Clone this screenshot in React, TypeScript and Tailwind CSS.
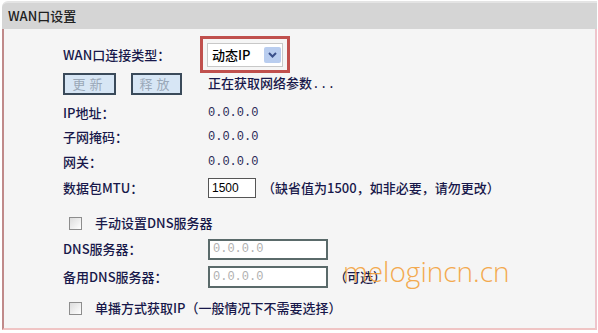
import React from "react";

const cjk = '"Noto Sans CJK SC", "Liberation Sans", sans-serif';

function Row({
  label,
  className,
  children,
}: {
  label?: string;
  className: string;
  children?: React.ReactNode;
}) {
  return (
    <div className={`flex items-center ${className}`}>
      <div className="w-[145px] shrink-0">{label}</div>
      <div className="flex items-center">{children}</div>
    </div>
  );
}

function Zero() {
  return (
    <span className="text-[12px] text-[#2a2a55]" style={{ fontFamily: '"Liberation Mono", monospace' }}>
      0.0.0.0
    </span>
  );
}

function Check({ text }: { text: string }) {
  return (
    <div className="flex items-center pl-[6px]">
      <span className="h-[13px] w-[13px] border border-[#8d8d8d] bg-gradient-to-br from-[#dcdcdc] to-white" />
      <span className="ml-[13px]">{text}</span>
    </div>
  );
}

function DnsInput() {
  return (
    <div className="flex h-full w-[120px] items-center border-2 border-[#5a6a6a] bg-white pl-[3px] text-[12px] font-normal text-[#b0b0b0]" style={{ fontFamily: '"Liberation Mono", monospace' }}>
      0.0.0.0
    </div>
  );
}

export default function App() {
  return (
    <div className="h-[333px] w-[598px] bg-white pl-[2px] pt-[1px] text-[13px] font-medium text-[#18184a]" style={{ fontFamily: cjk }}>
      <div className="relative w-[595px]">
        <div className="flex h-[28px] items-center rounded-tl-[6px] border-t-2 border-[#e4e4e4] bg-[#d5d5d5] pl-[6px] text-[#202020]">
          WAN口设置
        </div>
        <div className="h-[301px] border-b-2 border-l-2 border-r-2 border-b-[#f0c4c4] border-l-[#c08a8a] border-r-[#efc4cc] bg-[#f5f5f5] pl-[59px] pt-[7px]">
          <Row label="WAN口连接类型：" className="h-[37px]">
            <div className="-ml-[8px] flex h-[37px] w-[90px] items-center justify-center border-[3px] border-[#c0504d]">
              <div className="flex h-[24px] w-[76px] items-center justify-between border border-[#c8c8c8] bg-white pl-[4px] pr-[1px]">
                <span className="text-black">动态IP</span>
                <span className="flex h-[16px] w-[17px] items-center justify-center rounded-[2px] bg-[#b9cdef]">
                  <svg width="9" height="6" viewBox="0 0 9 6">
                    <path d="M1 1 L4.5 4.5 L8 1" stroke="#3a4f8a" strokeWidth="2" fill="none" />
                  </svg>
                </span>
              </div>
            </div>
          </Row>
          <div className="flex h-[22px] items-center">
            <div className="flex w-[145px] gap-[15px]">
              <span className="flex h-[22px] w-[53px] items-center justify-center border-2 border-[#3a4a5a] bg-[#d7e6f5] tracking-[4px] font-normal text-[#9aa8b8]">
                更新
              </span>
              <span className="flex h-[22px] w-[51px] items-center justify-center border-2 border-[#3a4a5a] bg-[#d7e6f5] tracking-[4px] font-normal text-[#9aa8b8]">
                释放
              </span>
            </div>
            <span>
              正在获取网络参数<span style={{ fontFamily: '"Liberation Mono", monospace' }}>...</span>
            </span>
          </div>
          <Row label="IP地址：" className="mt-[6px] h-[24px]">
            <Zero />
          </Row>
          <Row label="子网掩码：" className="h-[24px]">
            <Zero />
          </Row>
          <Row label="网关：" className="mt-[1px] h-[24px]">
            <Zero />
          </Row>
          <Row label="数据包MTU：" className="mt-[2px] h-[24px]">
            <div className="flex h-[20px] w-[48px] items-center border border-[#555] bg-white pl-[3px] text-[12px] font-normal text-black" style={{ fontFamily: '"Liberation Sans", sans-serif' }}>
              1500
            </div>
            <span className="ml-[6px]">（缺省值为1500，如非必要，请勿更改）</span>
          </Row>
          <div className="mt-[11px] flex h-[24px] items-center">
            <Check text="手动设置DNS服务器" />
          </div>
          <Row label="DNS服务器：" className="mt-[3px] h-[22px]">
            <div className="h-[21px]">
              <DnsInput />
            </div>
          </Row>
          <Row label="备用DNS服务器：" className="mt-[6px] h-[22px]">
            <div className="h-[22px]">
              <DnsInput />
            </div>
            <span className="ml-[6px]">（可选）</span>
          </Row>
          <div className="mt-[8px] flex h-[24px] items-center">
            <Check text="单播方式获取IP（一般情况下不需要选择）" />
          </div>
        </div>
        <span
          className="absolute left-[341px] top-[256px] text-[28px] leading-none text-[#f3a23c] opacity-90"
          style={{ fontFamily: '"Open Sans", "Liberation Sans", sans-serif', fontWeight: 300 }}
        >
          melogincn.cn
        </span>
      </div>
    </div>
  );
}
